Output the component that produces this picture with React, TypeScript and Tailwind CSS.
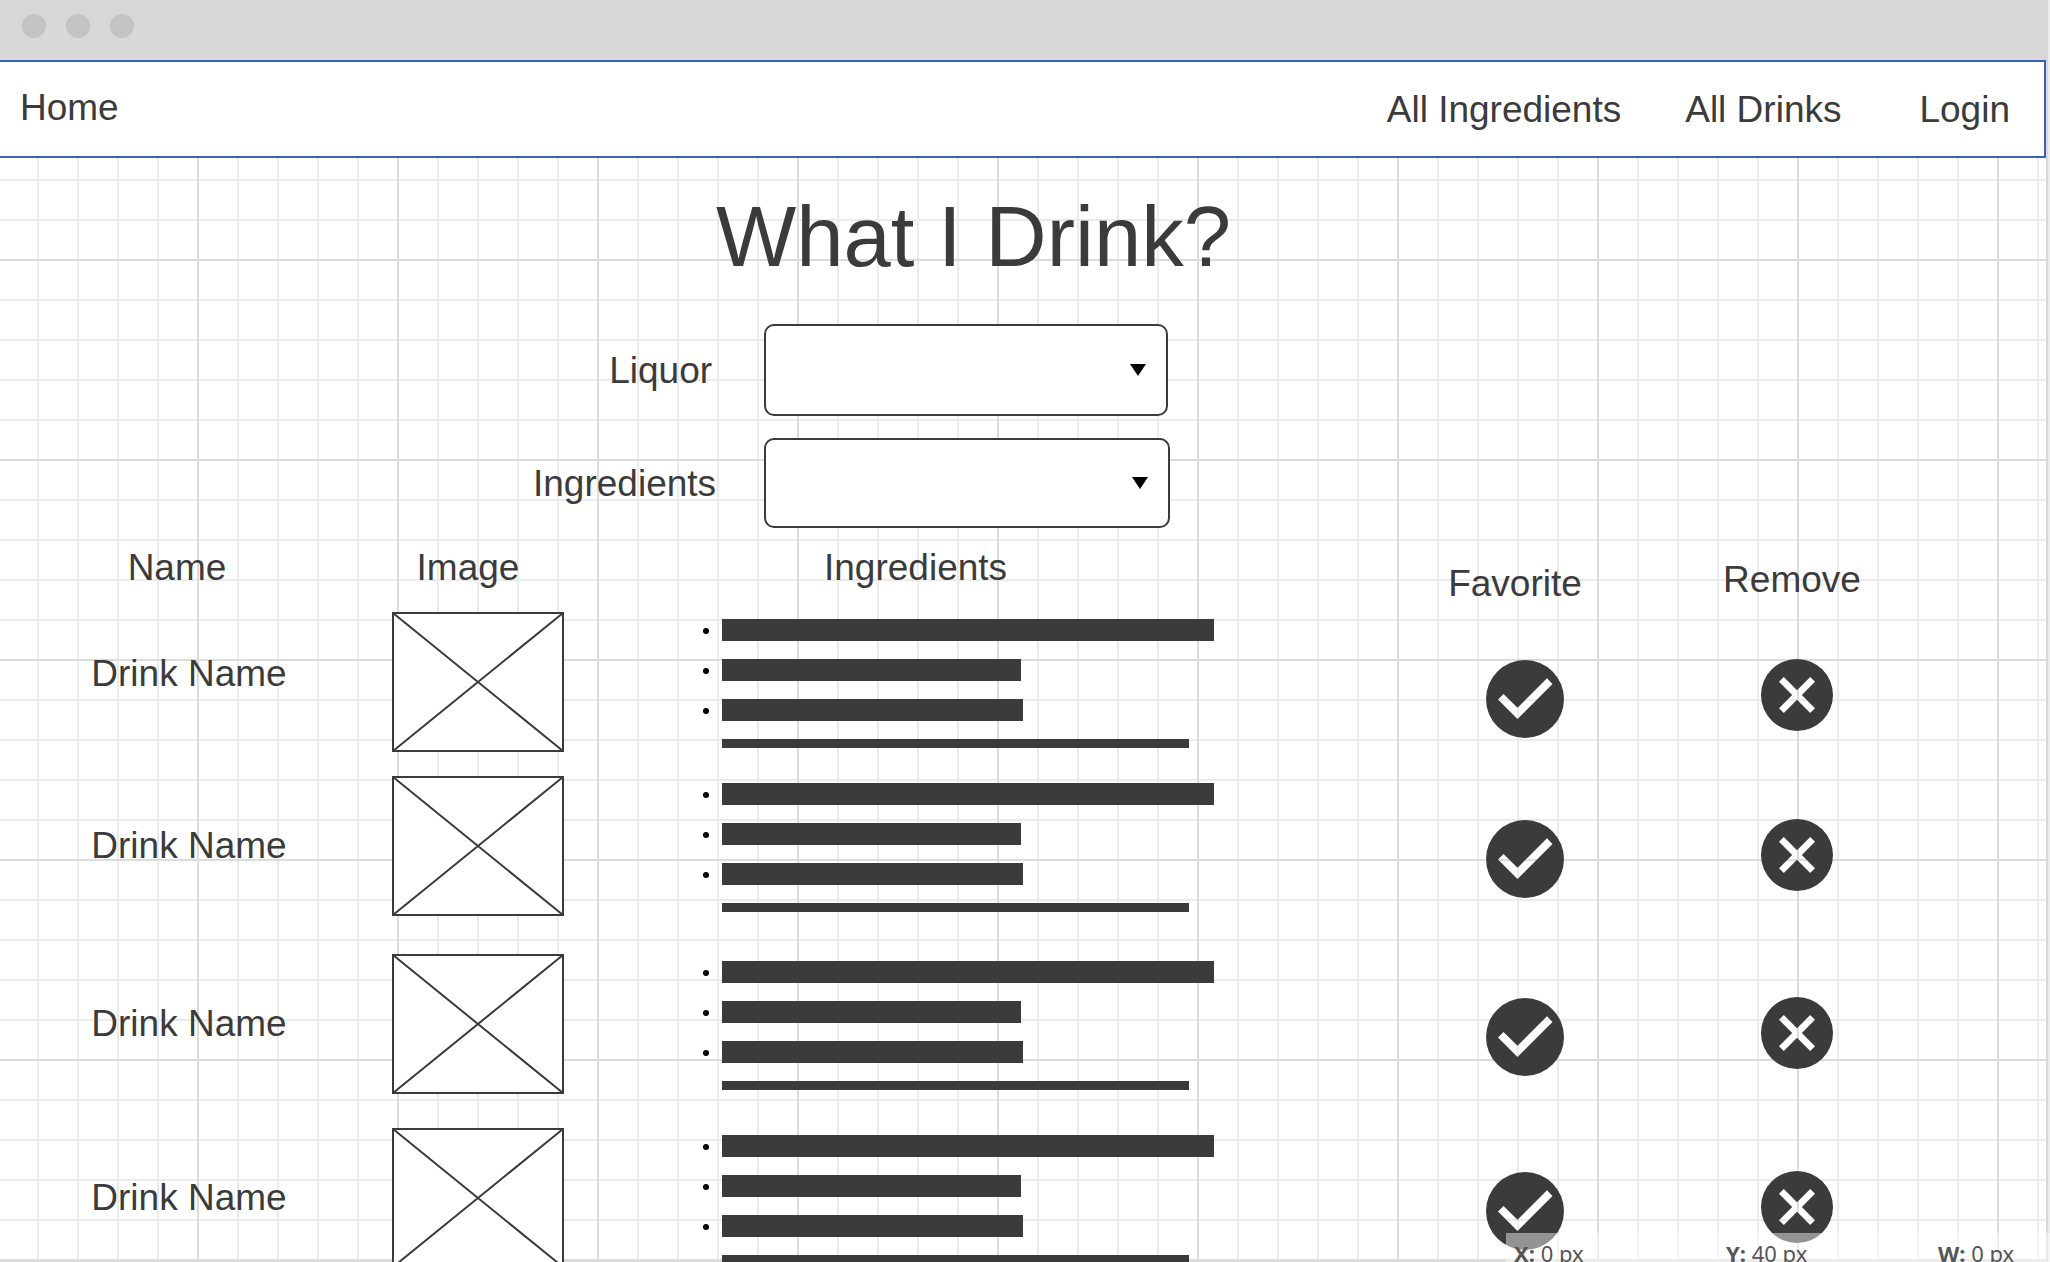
import React from "react";

const INK = "#3b3b3b";

type Drink = {
  id: number;
  name: string;
  rowClass: string;
  nameClass: string;
  favoriteClass: string;
  removeClass: string;
};

const drinks: Drink[] = [
  { id: 1, name: "Drink Name", rowClass: "h-[164px]", nameClass: "pt-10", favoriteClass: "pt-12", removeClass: "pt-[47px]" },
  { id: 2, name: "Drink Name", rowClass: "h-[178px]", nameClass: "pt-12", favoriteClass: "pt-11", removeClass: "pt-[43px]" },
  { id: 3, name: "Drink Name", rowClass: "h-[174px]", nameClass: "pt-12", favoriteClass: "pt-11", removeClass: "pt-[43px]" },
  { id: 4, name: "Drink Name", rowClass: "h-[174px]", nameClass: "pt-12", favoriteClass: "pt-11", removeClass: "pt-[43px]" },
];

function TitleBar() {
  return (
    <div className="flex h-[60px] gap-5 bg-[#d8d8d8] pt-3.5 pl-[22px]">
      <span className="size-6 rounded-full bg-[#c3c3c3]" />
      <span className="size-6 rounded-full bg-[#c3c3c3]" />
      <span className="size-6 rounded-full bg-[#c3c3c3]" />
    </div>
  );
}

function NavBar() {
  return (
    <nav className="flex h-[98px] items-center border-y-2 border-r-2 border-[#3c5fba] bg-white pt-0.5 pr-[34px] pl-5">
      <a href="#home" className="pb-1">Home</a>
      <a href="#ingredients" className="ml-auto">All Ingredients</a>
      <a href="#drinks" className="ml-16">All Drinks</a>
      <a href="#login" className="ml-[78px]">Login</a>
    </nav>
  );
}

function Dropdown({ id, className }: { id: string; className: string }) {
  return (
    <div className={"relative " + className}>
      <select id={id} className="size-full appearance-none rounded-[10px] border-2 border-[#3b3b3b] bg-white px-5">
        <option value=""></option>
      </select>
      <svg className="pointer-events-none absolute top-1/2 right-[22px] h-3 w-4 -translate-y-1/2" viewBox="0 0 16 12" aria-hidden="true">
        <path d="M0 0H16L8 12Z" fill="#000" />
      </svg>
    </div>
  );
}

function ImagePlaceholder() {
  return (
    <svg className="mx-auto block h-[140px] w-[172px]" viewBox="0 0 172 140" role="img" aria-label="Drink image">
      <rect x="1" y="1" width="170" height="138" fill="#fff" stroke={INK} strokeWidth="2" />
      <path d="M1 1L171 139M171 1L1 139" stroke={INK} strokeWidth="2" />
    </svg>
  );
}

function Bullet() {
  return <span className="mt-0.5 mr-[13px] size-1.5 rounded-full bg-black" />;
}

function IngredientBars() {
  return (
    <ul className="flex flex-col gap-[18px] pt-[7px]">
      <li className="flex items-center"><Bullet /><span className="h-[22px] w-[492px] bg-[#3b3b3b]" /></li>
      <li className="flex items-center"><Bullet /><span className="h-[22px] w-[299px] bg-[#3b3b3b]" /></li>
      <li className="flex items-center"><Bullet /><span className="h-[22px] w-[301px] bg-[#3b3b3b]" /></li>
      <li className="flex pl-[19px]"><span className="h-[9px] w-[467px] bg-[#3b3b3b]" /></li>
    </ul>
  );
}

function CheckIcon() {
  return (
    <svg className="block size-[78px]" viewBox="0 0 78 78" aria-hidden="true">
      <path
        fillRule="evenodd"
        fill={INK}
        d="M39 0A39 39 0 1 1 39 78A39 39 0 1 1 39 0ZM12 39.500L31.500 59L66.500 24L61 18.200L31.500 47.700L17.500 34Z"
      />
    </svg>
  );
}

function CrossIcon() {
  return (
    <svg className="block size-[72px]" viewBox="0 0 72 72" aria-hidden="true">
      <path
        fillRule="evenodd"
        fill={INK}
        d="M36 0A36 36 0 1 1 36 72A36 36 0 1 1 36 0ZM22.800 18L36 31.200L49.200 18L54 22.800L40.800 36L54 49.200L49.200 54L36 40.800L22.800 54L18 49.200L31.200 36L18 22.800Z"
      />
    </svg>
  );
}

export default function App() {
  return (
    <div className="h-screen overflow-hidden border-r-2 border-[#ebebeb] bg-white font-['Liberation_Sans',Arial,sans-serif] text-[37px] leading-11 text-[#3b3b3b]">
      <div className="flex h-full flex-col border-r-2 border-[#d8d8d8]">
        <TitleBar />
        <NavBar />
        <main className="relative min-h-0 flex-1 overflow-hidden">
          <svg className="absolute inset-0 size-full border-b-2 border-[#dcdcdc]" aria-hidden="true">
            <defs>
              <pattern id="grid" x="-2" y="-98" width="200" height="200" patternUnits="userSpaceOnUse">
                <path d="M40 0V200M80 0V200M120 0V200M160 0V200M0 40H200M0 80H200M0 120H200M0 160H200" stroke="#ebebeb" strokeWidth="2" />
                <path d="M0 0V200M200 0V200M0 0H200M0 200H200" stroke="#dcdcdc" strokeWidth="2" />
              </pattern>
            </defs>
            <rect width="100%" height="100%" fill="url(#grid)" />
          </svg>
          <div className="relative">
            <h1 className="pt-[31px] pl-[35%] text-[85px] leading-24">What I Drink?</h1>
            <form className="mt-[39px] flex flex-col gap-[22px]">
              <div className="flex items-center">
                <label htmlFor="liquor" className="w-[35%] pt-0.5 pr-1 text-right">Liquor</label>
                <Dropdown id="liquor" className="ml-12 h-[92px] w-[404px]" />
              </div>
              <div className="flex items-center">
                <label htmlFor="ingredient" className="w-[35%] pt-0.5 text-right">Ingredients</label>
                <Dropdown id="ingredient" className="ml-12 h-[90px] w-[406px]" />
              </div>
            </form>
            <table className="mt-3 w-full table-fixed border-collapse">
              <colgroup>
                <col className="w-[378px]" />
                <col className="w-[200px]" />
                <col />
                <col className="w-[272px]" />
                <col className="w-[272px]" />
                <col className="w-[113px]" />
              </colgroup>
              <thead>
                <tr className="h-[72px] align-top">
                  <th className="pt-1.5 pr-6 font-normal">Name</th>
                  <th className="pt-1.5 pr-5 font-normal">Image</th>
                  <th className="pt-1.5 pl-[246px] text-left font-normal">Ingredients</th>
                  <th className="pt-[22px] pr-5 font-normal">Favorite</th>
                  <th className="pt-[18px] pr-2.5 font-normal">Remove</th>
                  <td />
                </tr>
              </thead>
              <tbody>
                {drinks.map((drink) => (
                  <tr key={drink.id} className={"align-top " + drink.rowClass}>
                    <td className={"text-center " + drink.nameClass}>{drink.name}</td>
                    <td><ImagePlaceholder /></td>
                    <td className="pl-[125px]"><IngredientBars /></td>
                    <td className={drink.favoriteClass}>
                      <button type="button" aria-label="Favorite" className="mx-auto block rounded-full"><CheckIcon /></button>
                    </td>
                    <td className={drink.removeClass}>
                      <button type="button" aria-label="Remove" className="mx-auto block rounded-full"><CrossIcon /></button>
                    </td>
                    <td />
                  </tr>
                ))}
              </tbody>
            </table>
          </div>
        </main>
        <div className="absolute right-0 bottom-0 flex h-[29px] w-[544px] bg-white/45 pt-2 pl-2 font-['Noto_Sans',sans-serif] text-[22px] leading-6 text-[#555555]">
          <span className="w-[212px] shrink-0"><b>X:</b> 0 px</span>
          <span className="w-[212px] shrink-0"><b>Y:</b> 40 px</span>
          <span className="shrink-0"><b>W:</b> 0 px</span>
        </div>
      </div>
    </div>
  );
}
